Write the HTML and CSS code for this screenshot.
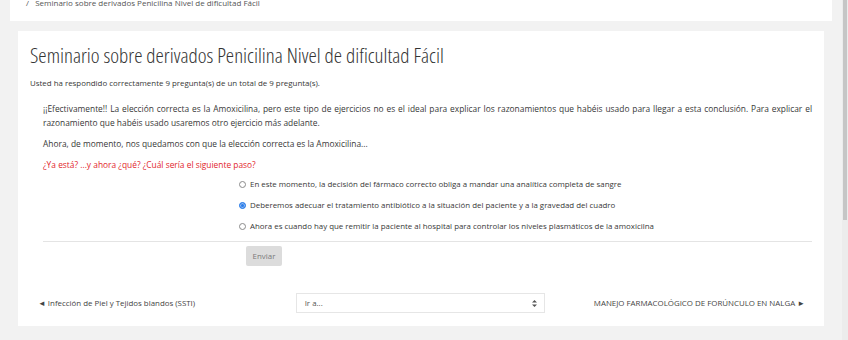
FILE: index.html
```html
<!DOCTYPE html>
<html lang="es">
<head>
  <meta charset="UTF-8">
  <meta name="viewport" content="width=device-width, initial-scale=1.0">
  <link rel="stylesheet" href="styles.css">
</head>
<body>
  <div id="page">
    <div id="content">
      <div class="breadcrumb">
        <span class="crumb">/&nbsp;&nbsp;&nbsp;Seminario sobre derivados Penicilina Nivel de dificultad Fácil</span>
      </div>

      <div class="card">
        <h2 class="title">Seminario sobre derivados Penicilina Nivel de dificultad Fácil</h2>
        <p class="score">Usted ha respondido correctamente 9 pregunta(s) de un total de 9 pregunta(s).</p>

        <div class="lesson">
          <p class="text">¡¡Efectivamente!! La elección correcta es la Amoxicilina, pero este tipo de ejercicios no es el ideal para explicar los razonamientos que habéis usado para llegar a esta conclusión. Para explicar el razonamiento que habéis usado usaremos otro ejercicio más adelante.</p>
          <p class="text">Ahora, de momento, nos quedamos con que la elección correcta es la Amoxicilina...</p>
          <p class="question">¿Ya está? ...y ahora ¿qué? ¿Cuál sería el siguiente paso?</p>

          <div class="options">
            <label class="option"><span class="radio"></span>En este momento, la decisión del fármaco correcto obliga a mandar una analítica completa de sangre</label>
            <label class="option"><span class="radio checked"></span>Deberemos adecuar el tratamiento antibiótico a la situación del paciente y a la gravedad del cuadro</label>
            <label class="option"><span class="radio"></span>Ahora es cuando hay que remitir la paciente al hospital para controlar los niveles plasmáticos de la amoxicilna</label>
          </div>

          <hr class="divider">

          <button class="submit">Enviar</button>
        </div>

        <div class="nav">
          <a class="prev" href="#">&#9668; Infección de Piel y Tejidos blandos (SSTI)</a>
          <div class="jump">
            <span>Ir a...</span>
            <svg width="5" height="7" viewBox="0 0 5 7"><path d="M2.5 0 L5 2.6 H0 Z M2.5 7 L5 4.4 H0 Z" fill="#555"/></svg>
          </div>
          <a class="next" href="#">MANEJO FARMACOLÓGICO DE FORÚNCULO EN NALGA &#9658;</a>
        </div>
      </div>
    </div>

    <div class="scrollbar"><div class="thumb"></div></div>
  </div>
</body>
</html>
```

FILE: styles.css
```css
body {
  margin: 0;
  background: #f2f2f2;
  color: #383838;
  font-family: 'Open Sans', sans-serif;
  font-size: 7.9px;
  height: 340px;
  overflow: hidden;
}

#page {
  display: flex;
  height: 340px;
}

#content {
  flex: 1;
  min-width: 0;
}

.breadcrumb {
  display: flow-root;
  margin: 0 10px;
  height: 21px;
  background: #fff;
  padding-left: 16px;
  box-sizing: border-box;
}

.crumb {
  display: block;
  margin-top: -2px;
  font-size: 8px;
  line-height: 10px;
  color: #555;
}

.card {
  margin: 10px 18px 0;
  padding: 12px 12px 13px;
  background: #fff;
}

.title {
  margin: 0;
  font-size: 21px;
  font-stretch: 80%;
  font-weight: 300;
  line-height: 24px;
  color: #333;
}

.score {
  margin: 10px 0 0;
  line-height: 12px;
}

.lesson {
  margin-left: 13px;
}

.text {
  margin: 13px 0 0;
  font-size: 8.4px;
  line-height: 14px;
  text-align: justify;
}

.text + .text {
  margin-top: 7px;
}

.question {
  margin: 7px 0 0;
  font-size: 8.4px;
  line-height: 14px;
  color: #e2262c;
}

.options {
  display: flex;
  flex-direction: column;
  gap: 7px;
  margin-top: 5px;
  padding-left: 196px;
}

.option {
  display: flex;
  align-items: center;
  line-height: 14px;
}

.radio {
  width: 5px;
  height: 5px;
  border: 1px solid #8a8a8a;
  border-radius: 50%;
  margin-right: 4px;
  box-sizing: content-box;
}

.radio.checked {
  border-color: #2b7de9;
  background: #2b7de9;
  box-shadow: inset 0 0 0 1px #8fbaf3;
}

.divider {
  margin: 8px 0 0;
  border: none;
  border-top: 1px solid #e4e4e4;
}

.submit {
  display: block;
  margin: 4px 0 0 203px;
  width: 36px;
  height: 20px;
  padding: 0;
  border: none;
  border-radius: 2px;
  background: #dcdcdc;
  color: #7a7a7a;
  font-family: 'Open Sans', sans-serif;
  font-size: 7.9px;
}

.nav {
  display: grid;
  grid-template-columns: 1fr 1fr 1fr;
  align-items: center;
  margin: 27px 7px 0 8px;
}

.nav a {
  color: #444;
  text-decoration: none;
}

.next {
  text-align: right;
}

.jump {
  display: flex;
  align-items: center;
  justify-content: space-between;
  height: 20px;
  margin: 0 4px 0 2px;
  padding: 0 7px 0 8px;
  border: 1px solid #e6e6e6;
  box-sizing: border-box;
  color: #555;
}

.scrollbar {
  flex-shrink: 0;
  width: 6px;
  background: #ececec;
}

.thumb {
  height: 220px;
  margin: 0 1px;
  background: #c6c6c6;
}
```
